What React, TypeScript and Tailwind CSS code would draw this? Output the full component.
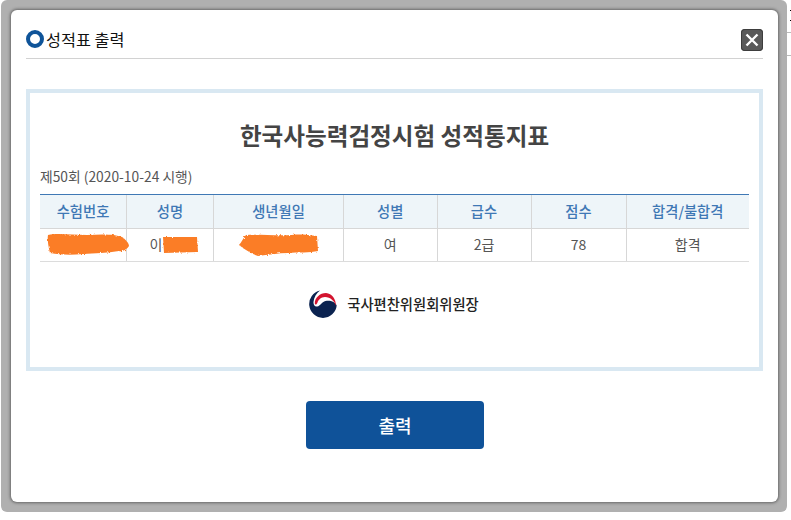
const font = { fontFamily: '"Noto Sans CJK KR", "Noto Sans", sans-serif' };

const cols = "grid grid-cols-[87px_87px_130px_93.5px_94px_95px_122.5px]";
const heads = ["수험번호", "성명", "생년월일", "성별", "급수", "점수", "합격/불합격"];

function Blob({ w, h, d, id }: { w: number; h: number; d: string; id: string }) {
  return (
    <svg width={w} height={h} viewBox={`0 0 ${w} ${h}`} className="block overflow-visible">
      <filter id={id} x="-10%" y="-30%" width="120%" height="160%">
        <feTurbulence type="fractalNoise" baseFrequency="0.45" numOctaves="2" seed="4" />
        <feDisplacementMap in="SourceGraphic" scale="3" />
      </filter>
      <path d={d} fill="#fb7d28" filter={`url(#${id})`} />
    </svg>
  );
}

function Emblem() {
  return (
    <svg width="28" height="28" viewBox="0 0 28 28">
      <path d="M11 .6A13.800 13.800 0 1 0 27.700 15.500C26.500 12 21 9.800 16.500 11C12.500 12 11.500 16 8.200 16.500C5.500 17 4.300 14.500 4.500 12C4.800 7.500 7.500 3.500 11 .6z" fill="#0b2350" />
      <path d="M5.800 13.500C5.500 8 11 3 17 3C23 3.500 27 9 27 16C25.500 11 21.500 7 16 7C12 7 9.300 10 8.500 12.500C8 14.500 6 15.500 5.800 13.500z" fill="#d3142f" />
    </svg>
  );
}

export default function App() {
  return (
    <div className="relative h-[520px] w-[791px] overflow-hidden bg-white" style={font}>
      <div className="ml-px h-[512px] w-[786px] rounded-b-md rounded-t-md bg-[#b0b0b0] p-[10px] pr-[9px]">
        <div className="flex h-[492px] w-[767px] flex-col rounded-md bg-white px-[15px] shadow-[0_0_3px_1px_#666]">
          <div className="flex h-[49px] shrink-0 items-end justify-between border-b border-[#d2d2d2] pb-[7px]">
            <div className="mb-[1px] flex items-center">
              <span className="h-[18px] w-[18px] rounded-full border-[4px] border-[#0f5499]" />
              <span className="ml-[2px] text-[16.3px] leading-[22px] text-[#111]">성적표 출력</span>
            </div>
            <button className="flex h-[22px] w-[22px] items-center justify-center rounded-[4px] bg-[#5a5a5a] shadow-[inset_0_0_0_1px_#3d3d3d]">
              <svg width="14" height="14" viewBox="0 0 14 14">
                <path d="M1.500 1.500l11 11M12.500 1.500l-11 11" stroke="#fff" strokeWidth="2.400" />
              </svg>
            </button>
          </div>

          <div className="mt-[30px] flex h-[282px] shrink-0 flex-col border-[4px] border-[#d9e8f2] px-[10px]">
            <h1 className="mt-[25px] text-center text-[23.6px] leading-[34px] font-bold text-[#444]">
              한국사능력검정시험 성적통지표
            </h1>
            <p className="mt-[15px] text-[13.8px] leading-[18px] text-[#555]">제50회 (2020-10-24 시행)</p>
            <div className="mt-[9px] border-t border-[#3f78b5]">
              <div className={`${cols} h-[34px] border-b border-[#d7d7d7] bg-[#eef5f9]`}>
                {heads.map((h, i) => (
                  <div
                    key={h}
                    className={`flex items-center justify-center pb-[1px] text-[14.300px] font-medium text-[#3f78b5] ${i < 6 ? "border-r border-[#d7d7d7]" : ""}`}
                  >
                    {h}
                  </div>
                ))}
              </div>
              <div className={`${cols} h-[33px] border-b border-[#dcdcdc] text-[14px] text-[#555]`}>
                <div className="relative flex items-center justify-center border-r border-[#d7d7d7]">
                  <span className="absolute top-[3px] left-[7px]">
                    <Blob id="b1" w={83} h={24} d="M1 3C10 1 25 3 40 3c15-1 28-1 35 2 3 2 7 6 7 9-2 3-6 6-10 5-12 2-24 2-36 3-11 1-22 1-33-1C2 17 0 8 1 3z" />
                  </span>
                </div>
                <div className="flex items-center justify-center border-r border-[#d7d7d7] pb-[1px] pl-[8px]">
                  이
                  <span className="ml-[1px]">
                    <Blob id="b2" w={35} h={17} d="M0 1h34l1 15-34 1z" />
                  </span>
                </div>
                <div className="flex items-center justify-center border-r border-[#d7d7d7] pr-[2px]">
                  <Blob id="b3" w={80} h={22} d="M8 1c12-1 30 1 46 0 8-1 16 0 25 1l1 15c-8 2-20 1-30 2-10 0-20 2-30 3-6-2-14-7-19-11 2-2 5-8 7-10z" />
                </div>
                <div className="flex items-center justify-center border-r border-[#d7d7d7] pb-[1px]">여</div>
                <div className="flex items-center justify-center border-r border-[#d7d7d7] pb-[1px]">2급</div>
                <div className="flex items-center justify-center border-r border-[#d7d7d7] pb-[1px]">78</div>
                <div className="flex items-center justify-center pb-[1px]">합격</div>
              </div>
            </div>
            <div className="mt-[28px] flex items-center justify-center gap-[10px] pr-[1px]">
              <Emblem />
              <span className="text-[14.300px] font-medium text-[#222]">국사편찬위원회위원장</span>
            </div>
          </div>

          <div className="mt-[30px] flex justify-center">
            <button className="h-[48px] w-[178px] rounded-[4px] bg-[#0f5299] pl-[1px] text-[18px] font-medium text-white">
              출력
            </button>
          </div>
        </div>
      </div>
      <span className="absolute top-[10px] right-0 h-px w-[1px] bg-black" />
      <span className="absolute top-[20px] right-0 h-px w-[1px] bg-black" />
      <span className="absolute top-[32px] right-0 h-px w-[4px] bg-[#bbb]" />
      <span className="absolute top-[55px] right-0 h-px w-[4px] bg-[#bbb]" />
    </div>
  );
}
